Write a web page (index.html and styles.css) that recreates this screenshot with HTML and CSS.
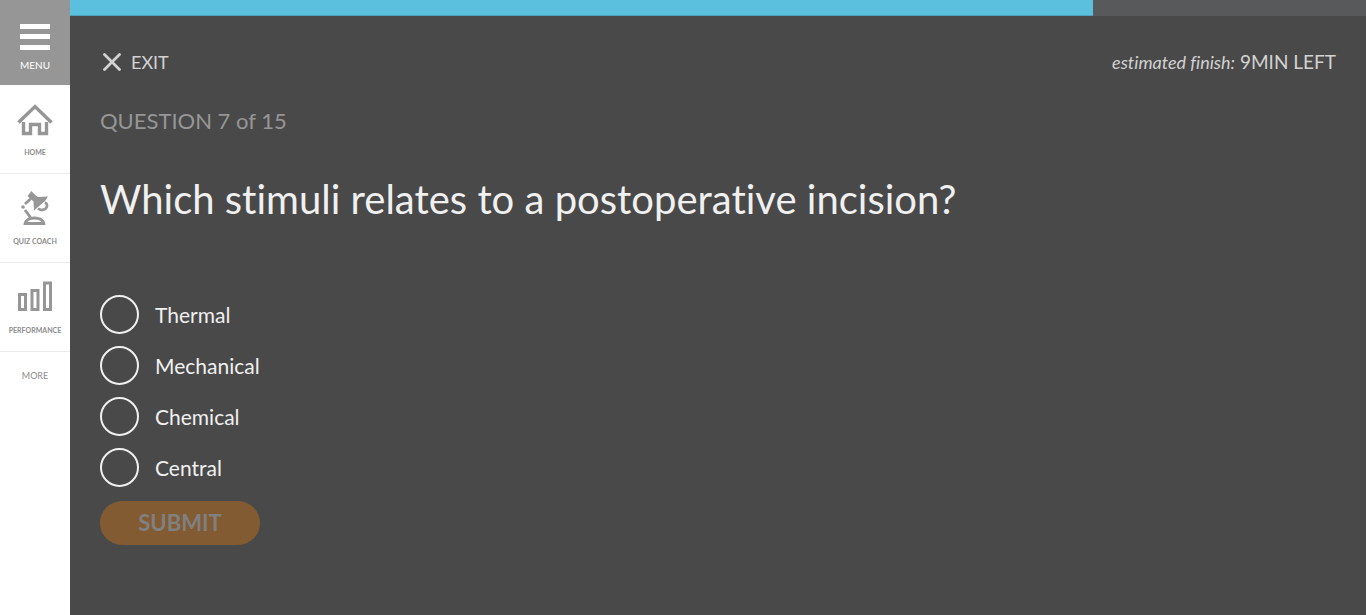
FILE: index.html
```html
<!DOCTYPE html>
<html lang="en">
<head>
<meta charset="utf-8">
<meta name="viewport" content="width=device-width, initial-scale=1">
<title>Quiz</title>
<link rel="stylesheet" href="styles.css">
</head>
<body>
<div class="app">
  <nav class="sidebar">
    <button class="menu" type="button">
      <svg width="30" height="26" viewBox="0 0 30 26" fill="#fff" aria-hidden="true"><path d="M0 0h30v5H0zM0 10h30v5H0zM0 21h30v5H0z"/></svg>
      <span>MENU</span>
    </button>
    <a class="nav-item" href="#">
      <svg width="36" height="36" viewBox="0 0 36 36" fill="none" stroke="#969696" aria-hidden="true"><path d="M1.500 21.500 18 5.500 34.500 21.500" stroke-width="3.400"/><path d="M6.500 21v11.500h7V23.500h9v9h7V21" stroke-width="3.400"/></svg>
      <span>HOME</span>
    </a>
    <a class="nav-item" href="#">
      <svg width="36" height="36" viewBox="0 0 36 36" aria-hidden="true"><g fill="#969696"><path d="M14.500 1 18 5l3 2 10-.5-3 4.500-11 9.500-.5-9L10.500 6z"/><circle cx="6" cy="17" r="1.800"/><path fill-rule="evenodd" d="M6.500 35c0-5 4.500-8.500 11-8.500s11 3.500 11 8.500zM10.500 32h14c-1-1.500-3-2.500-7-2.500s-6 1-7 2.500z"/></g><path d="M14 8.500 8 14M8 20l5.500 7.500" stroke="#969696" stroke-width="2.800" fill="none"/><path d="M21 18.500c3 2.500 7 1.500 8.500-1 1.200-2 .5-4-1.500-5" stroke="#969696" stroke-width="2.600" fill="none"/></svg>
      <span>QUIZ COACH</span>
    </a>
    <a class="nav-item" href="#">
      <svg width="36" height="36" viewBox="0 0 36 36" fill="none" stroke="#969696" stroke-width="3" aria-hidden="true"><path d="M2.500 15.500h6v15h-6zM15 11.500h6v19h-6zM27.500 4h6v26.500h-6z"/></svg>
      <span>PERFORMANCE</span>
    </a>
    <a class="more" href="#">MORE</a>
  </nav>
  <main class="main">
    <div class="progress"><div class="progress-fill" style="width:78.9%"></div></div>
    <div class="content">
      <header class="topbar">
        <button class="exit" type="button">
          <svg width="18" height="18" viewBox="0 0 18 18" fill="none" stroke="#d2d2d2" stroke-width="2.800" stroke-linecap="round" aria-hidden="true"><path d="M1.500 1.500l15 15M16.500 1.500l-15 15"/></svg>
          <span>EXIT</span>
        </button>
        <p class="finish"><em>estimated finish:</em> 9MIN LEFT</p>
      </header>
      <p class="count">QUESTION 7 of 15</p>
      <h1 class="question">Which stimuli relates to a postoperative incision?</h1>
      <form class="answers">
        <label class="answer"><input type="radio" name="answer"><span>Thermal</span></label>
        <label class="answer"><input type="radio" name="answer"><span>Mechanical</span></label>
        <label class="answer"><input type="radio" name="answer"><span>Chemical</span></label>
        <label class="answer"><input type="radio" name="answer"><span>Central</span></label>
        <button class="submit" type="submit" disabled>SUBMIT</button>
      </form>
    </div>
  </main>
</div>
</body>
</html>
```
FILE: styles.css
```css
* { box-sizing: border-box; }
body { margin: 0; background: #494949; color: #f0f0f0; font-family: Lato, "Liberation Sans", sans-serif; font-variant-ligatures: none; }
button { border: 0; padding: 0; background: none; color: inherit; font-family: inherit; cursor: pointer; }
a { text-decoration: none; }
svg { display: block; }
.app { display: flex; min-height: 100vh; }

.sidebar { flex: none; width: 70px; display: flex; flex-direction: column; background: #fff; color: #8c8c8c; }
.menu { height: 85px; padding-top: 24px; display: flex; flex-direction: column; align-items: center; gap: 9px; background: #969696; color: #fff; font-size: 10px; line-height: 12px; }
.nav-item { height: 89px; padding: 16px 0; display: flex; flex-direction: column; align-items: center; justify-content: space-between; border-bottom: 1px solid #ebebeb; color: inherit; font-size: 7px; font-weight: 700; line-height: 10px; }
.more { padding-top: 18px; color: inherit; font-size: 9px; line-height: 12px; text-align: center; }

.main { flex: 1; min-width: 0; }
.progress { height: 16px; background: #58595b; }
.progress-fill { height: 100%; background: #5bc0de; border-bottom: 1px solid #4ba3be; }
.content { padding: 32px 30px; }
.topbar { display: flex; justify-content: space-between; align-items: center; height: 28px; color: #d2d2d2; }
.exit { display: flex; align-items: center; gap: 10px; padding-left: 3px; font-size: 18px; line-height: 24px; }
.finish { margin: 0; font-size: 19px; line-height: 24px; }
.finish em { font-size: 18px; }
.count { margin: 30px 0 0; color: #969696; font-size: 22px; line-height: 30px; }
.question { margin: 35px 0 0; font-size: 40px; font-weight: 400; line-height: 56px; }
.answers { margin-top: 68px; display: flex; flex-direction: column; align-items: flex-start; gap: 12px; }
.answer { display: flex; align-items: center; gap: 16px; font-size: 21px; line-height: 28px; cursor: pointer; }
.answer input { appearance: none; width: 39px; height: 39px; margin: 0; border: 2px solid #f0f0f0; border-radius: 50%; }
.answer input:checked { background: radial-gradient(#f0f0f0 40%, transparent 42%); }
.submit { width: 160px; height: 44px; margin-top: 2px; border-radius: 22px; background: #825b32; color: #808080; font-size: 22px; font-weight: 700; line-height: 28px; }
```
